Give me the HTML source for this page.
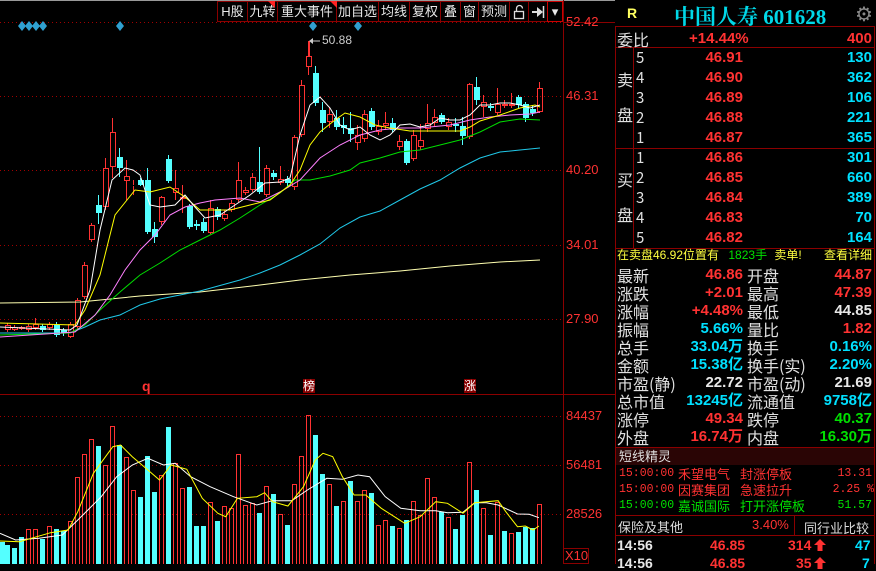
<!DOCTYPE html>
<html><head><meta charset="utf-8"><style>
*{margin:0;padding:0;box-sizing:border-box}
body{width:876px;height:564px;background:#000;overflow:hidden;position:relative;font-family:"Liberation Sans","Noto Sans CJK SC",sans-serif}
.a{position:absolute;white-space:nowrap}
.btn{position:absolute;top:1px;height:21px;border:1px solid #8b0000;color:#e8e8e8;font-size:13px;line-height:19px;text-align:center;font-family:"Liberation Sans","WenQuanYi Zen Hei",sans-serif}
.lbl{position:absolute;color:#e0e0e0;font-size:16px;font-family:"WenQuanYi Zen Hei","Noto Sans CJK SC",sans-serif;line-height:18px}
.num{position:absolute;font-weight:bold;font-size:15px;line-height:18px;text-align:right}
.r{color:#ff3232}.c{color:#00e0ff}.w{color:#e8e8e8}.g{color:#00e000}.y{color:#ffff40}
.ax{position:absolute;left:566px;color:#ff3232;font-size:13px}
.sm{position:absolute;font-size:13px;line-height:16px;font-family:"WenQuanYi Zen Hei","Noto Sans CJK SC",sans-serif}
.tm{position:absolute;font-size:11.5px;line-height:16px;font-family:"Liberation Mono",monospace}
</style></head><body>
<div class="a" style="left:0;top:0;width:615px;height:1px;background:#999"></div>
<svg id="ch" class="a" style="left:0;top:0" width="615" height="564"></svg>
<!-- toolbar -->
<div class="btn" style="left:217px;width:31px">H股</div>
<div class="btn" style="left:247px;width:31px">九转</div>
<div class="btn" style="left:277px;width:60px">重大事件</div>
<div class="btn" style="left:336px;width:43px">加自选</div>
<div class="btn" style="left:378px;width:32px">均线</div>
<div class="btn" style="left:409px;width:32px">复权</div>
<div class="btn" style="left:440px;width:21px">叠</div>
<div class="btn" style="left:460px;width:19px">窗</div>
<div class="btn" style="left:478px;width:32px">预测</div>
<div class="btn" style="left:509px;width:20px"><svg width="14" height="16" style="margin-top:2px"><path d="M4.5 7V4.5a3 3 0 0 1 6 0" fill="none" stroke="#ddd" stroke-width="1.3"/><rect x="2.5" y="7.5" width="9" height="7" fill="none" stroke="#ddd" stroke-width="1.3"/></svg></div>
<div class="btn" style="left:528px;width:20px"><svg width="14" height="14" style="margin-top:3px"><path d="M1 7h6" stroke="#ddd" stroke-width="2"/><path d="M6 2l6 5-6 5z" fill="#ddd"/><path d="M12.5 1v12" stroke="#ddd" stroke-width="1.5"/></svg></div>
<div class="btn" style="left:547px;width:16px;border-color:#c00">&#9662;</div>
<div class="a" style="left:268px;top:1px;width:0;height:0;border-left:7px solid transparent;border-top:7px solid #f22"></div>
<div class="a" style="left:330px;top:1px;width:0;height:0;border-left:7px solid transparent;border-top:7px solid #f22"></div>
<!-- axis labels -->
<div class="ax" style="top:14px">52.42</div>
<div class="ax" style="top:88px">46.31</div>
<div class="ax" style="top:162px">40.20</div>
<div class="ax" style="top:237px">34.01</div>
<div class="ax" style="top:311px">27.90</div>
<div class="ax" style="top:408px">84437</div>
<div class="ax" style="top:457px">56481</div>
<div class="ax" style="top:506px">28526</div>
<div class="a" style="left:563px;top:548px;width:26px;height:16px;border:1px solid #8b0000;color:#ff3232;font-size:13px;line-height:14px;padding-left:1px">X10</div>
<div class="a" style="left:322px;top:33px;color:#ccc;font-size:12px">50.88</div>
<div class="a" style="left:142px;top:378px;color:#ff3232;font-size:14px;font-weight:bold">q</div>
<div class="a" style="left:303px;top:379px;color:#fff;background:#800;font-size:12px;line-height:14px">榜</div>
<div class="a" style="left:464px;top:379px;color:#fff;background:#800;font-size:12px;line-height:14px">涨</div>
<!-- right panel -->
<div class="a" style="left:615px;top:26px;width:1px;height:538px;background:#8b0000"></div>
<div class="a" style="left:874px;top:26px;width:1px;height:538px;background:#8b0000"></div>
<div class="a" style="left:627px;top:5px;color:#ffff60;font-size:14px;font-weight:bold">R</div>
<div class="a" style="left:674px;top:1px;color:#00d8e8;font-size:21px;font-weight:bold;font-family:'Liberation Serif','Noto Serif CJK SC',serif">中国人寿 601628</div>
<div class="a" style="left:855px;top:2px;color:#888;font-size:20px">&#9881;</div>
<div class="a" style="left:615px;top:26px;width:260px;height:1px;background:#8b0000"></div>
<div class="a" style="left:615px;top:47px;width:260px;height:1px;background:#8b0000"></div>
<div class="a" style="left:615px;top:148px;width:260px;height:1px;background:#8b0000"></div>
<div class="a" style="left:615px;top:248px;width:260px;height:1px;background:#8b0000"></div>
<div class="a" style="left:633px;top:48px;width:1px;height:200px;background:#8b0000"></div>
<div class="lbl" style="left:617px;top:30px">委比</div>
<div class="num r" style="top:30px;width:90px;text-align:left;left:689px">+14.44%</div>
<div class="num r" style="left:800px;top:30px;width:72px">400</div>
<div class="lbl" style="left:617px;top:70px">卖</div><div class="lbl" style="left:617px;top:105px">盘</div>
<div class="lbl" style="left:617px;top:170px">买</div><div class="lbl" style="left:617px;top:205px">盘</div>
<div id="ob"></div>
<div class="a" style="left:617px;top:248px;font-size:12px;line-height:14px;font-family:'WenQuanYi Zen Hei',sans-serif"><span class="y">在卖盘46.92位置有</span> <span class="g" style="margin-left:6px">1823手</span> <span class="y" style="margin-left:4px">卖单!</span></div>
<div class="a y" style="left:824px;top:248px;font-size:12px;line-height:14px;font-family:'WenQuanYi Zen Hei',sans-serif">查看详细</div>
<div id="dt"></div>
<div class="a" style="left:615px;top:447px;width:260px;height:1px;background:#8b0000"></div>
<div class="a" style="left:616px;top:448px;width:258px;height:17px;background:#2a0505"></div>
<div class="a" style="left:619px;top:448px;color:#ddd;font-size:13px;line-height:17px;font-family:'WenQuanYi Zen Hei',sans-serif">短线精灵</div>
<div class="tm r" style="left:619px;top:466px">15:00:00</div><div class="sm r" style="left:678px;top:466px">禾望电气</div><div class="sm r" style="left:740px;top:466px">封涨停板</div><div class="tm r" style="left:820px;top:466px;width:52px;text-align:right">13.31</div>
<div class="tm r" style="left:619px;top:482px">15:00:00</div><div class="sm r" style="left:678px;top:482px">因赛集团</div><div class="sm r" style="left:740px;top:482px">急速拉升</div><div class="tm r" style="left:810px;top:482px;width:64px;text-align:right">2.25 %</div>
<div class="tm g" style="left:619px;top:498px">15:00:00</div><div class="sm g" style="left:678px;top:498px">嘉诚国际</div><div class="sm g" style="left:740px;top:498px">打开涨停板</div><div class="tm g" style="left:820px;top:498px;width:52px;text-align:right">51.57</div>
<div class="a" style="left:615px;top:515px;width:260px;height:1px;background:#8b0000"></div>
<div class="a" style="left:794px;top:515px;width:1px;height:20px;background:#8b0000"></div>
<div class="a" style="left:618px;top:517px;color:#ddd;font-size:13px;font-family:'WenQuanYi Zen Hei',sans-serif">保险及其他</div>
<div class="a r" style="left:752px;top:517px;font-size:13px">3.40%</div>
<div class="a" style="left:804px;top:518px;color:#ddd;font-size:13px;font-family:'WenQuanYi Zen Hei',sans-serif">同行业比较</div>
<div class="a" style="left:615px;top:535px;width:260px;height:1px;background:#8b0000"></div>
<div class="a w" style="left:617px;top:537px;font-size:14px;font-weight:bold">14:56</div>
<div class="a r" style="left:710px;top:537px;font-size:14px;font-weight:bold">46.85</div>
<div class="a r" style="left:788px;top:537px;font-size:14px;font-weight:bold">314</div>
<svg class="a" style="left:814px;top:539px" width="12" height="12"><path d="M6 0L12 6H8.5V12H3.5V6H0z" fill="#ff3232"/></svg>
<div class="a c" style="left:855px;top:537px;font-size:14px;font-weight:bold">47</div>
<div class="a w" style="left:617px;top:555px;font-size:14px;font-weight:bold">14:56</div>
<div class="a r" style="left:710px;top:555px;font-size:14px;font-weight:bold">46.85</div>
<div class="a r" style="left:796px;top:555px;font-size:14px;font-weight:bold">35</div>
<svg class="a" style="left:814px;top:557px" width="12" height="12"><path d="M6 0L12 6H8.5V12H3.5V6H0z" fill="#ff3232"/></svg>
<div class="a c" style="left:862px;top:555px;font-size:14px;font-weight:bold">7</div>
<script>
var ob=document.getElementById('ob'),h='';
var sp=['46.91','46.90','46.89','46.88','46.87'],sv=['130','362','106','221','365'];
var bp=['46.86','46.85','46.84','46.83','46.82'],bv=['301','660','389','70','164'];
for(var i=0;i<5;i++){var t=49+i*20;h+='<div class="lbl" style="left:636px;top:'+t+'px;font-size:15px">'+(5-i)+'</div><div class="num r" style="left:680px;top:'+t+'px;width:63px">'+sp[i]+'</div><div class="num c" style="left:800px;top:'+t+'px;width:72px">'+sv[i]+'</div>';
var t2=149+i*20;h+='<div class="lbl" style="left:636px;top:'+t2+'px;font-size:15px">'+(i+1)+'</div><div class="num r" style="left:680px;top:'+t2+'px;width:63px">'+bp[i]+'</div><div class="num c" style="left:800px;top:'+t2+'px;width:72px">'+bv[i]+'</div>';}
ob.innerHTML=h;
var rows=[['最新','46.86','r','开盘','44.87','r'],['涨跌','+2.01','r','最高','47.39','r'],['涨幅','+4.48%','r','最低','44.85','w'],['振幅','5.66%','c','量比','1.82','r'],['总手','33.04万','c','换手','0.16%','c'],['金额','15.38亿','c','换手(实)','2.20%','c'],['市盈(静)','22.72','w','市盈(动)','21.69','w'],['总市值','13245亿','c','流通值','9758亿','c'],['涨停','49.34','r','跌停','40.37','g'],['外盘','16.74万','r','内盘','16.30万','g']];
h='';rows.forEach(function(r,i){var t=266+i*18;h+='<div class="lbl" style="left:617px;top:'+t+'px">'+r[0]+'</div><div class="num '+r[2]+'" style="left:660px;top:'+t+'px;width:83px">'+r[1]+'</div><div class="lbl" style="left:747px;top:'+t+'px">'+r[3]+'</div><div class="num '+r[5]+'" style="left:790px;top:'+t+'px;width:82px">'+r[4]+'</div>';});
document.getElementById('dt').innerHTML=h;
var s='',R='#ff3232',C='#54ffff';
function ln(x1,y1,x2,y2,c,extra){s+='<line x1="'+x1+'" y1="'+y1+'" x2="'+x2+'" y2="'+y2+'" stroke="'+c+'" '+(extra||'')+'/>';}
[22,96,170,245,319,416,465,514].forEach(function(y){ln(0,y+.5,563,y+.5,'#a00000','stroke-dasharray="1,3"');});
ln(563.5,0,563.5,564,'#8b0000');ln(0,394.5,615,394.5,'#8b0000');ln(563,22.5,615,22.5,'#8b0000');
var K=[[330,325,323,332],[330,327,325,331],[329,327,326,330],[330,326,324,332],[328,324,318,330],[326,330,324,332],[328,324,322,330],[325,335,322,337],[330,333,328,336],[337,324,322,338],[327,300,298,330],[297,265,262,299],[240,225,223,242],[205,213,195,224],[207,168,158,210],[167,132,118,178],[157,168,148,177],[181,176,160,200],[186,185,180,195],[180,185,178,186],[180,232,168,234],[229,237,222,243],[222,197,196,225],[159,181,155,183],[193,188,170,200],[199,197,185,213],[206,227,204,229],[224,226,220,230],[222,231,218,233],[233,208,200,234],[209,217,207,220],[219,214,210,221],[210,203,200,212],[200,180,162,202],[193,190,187,195],[190,177,173,192],[182,192,147,194],[195,168,165,197],[173,177,170,180],[183,179,166,185],[179,183,176,186],[187,137,135,190],[135,85,80,137],[67,56,41,75],[73,103,66,106],[110,123,102,132],[122,114,107,128],[118,127,110,130],[125,128,117,134],[128,134,112,142],[143,135,125,150],[139,114,110,142],[111,127,108,130],[132,126,120,135],[126,123,112,130],[123,130,118,132],[147,141,135,150],[141,163,139,165],[159,135,130,161],[147,140,124,150],[129,123,104,132],[123,117,109,126],[115,122,113,124],[127,122,118,130],[124,126,118,132],[126,136,117,145],[137,84,83,139],[87,100,77,105],[107,102,95,117],[106,108,103,111],[113,104,88,115],[106,104,100,108],[106,104,93,108],[97,105,95,108],[104,118,102,122],[109,113,105,116],[112,88,82,113]];
K.forEach(function(k,i){var x=7+7*i,o=k[0],c=k[1],up=c<o;var t=Math.min(o,c),b=Math.max(o,c);if(b-t<1)b=t+1;
if(up){ln(x+.5,k[2],x+.5,t,R);ln(x+.5,b,x+.5,k[3],R);s+='<rect x="'+(x-2)+'.5" y="'+(t+.5)+'" width="5" height="'+(b-t-1)+'" fill="none" stroke="'+R+'"/>';}
else{ln(x+.5,k[2],x+.5,k[3],C);s+='<rect x="'+(x-2)+'" y="'+t+'" width="6" height="'+(b-t)+'" fill="'+C+'"/>';}});
function pl(pts,c,w){s+='<polyline fill="none" stroke="'+c+'" stroke-width="'+(w||1)+'" points="'+pts.map(function(p){return p.join(',')}).join(' ')+'"/>';}
pl([[0,303],[80,302],[140,296],[200,292],[260,285],[300,280],[350,275],[400,271],[450,266],[500,262],[540,260]],'#ffffb0');
pl([[0,333],[70,333],[85,327],[100,320],[120,315],[140,305],[160,299],[180,295],[200,291],[240,280],[260,273],[280,265],[300,255],[320,244],[340,228],[360,217],[380,211],[400,200],[420,189],[440,180],[460,168],[480,158],[500,152],[520,150],[540,148]],'#20c8e8');
pl([[0,335],[70,333],[85,325],[100,310],[120,292],[140,275],[160,263],[180,250],[200,240],[220,230],[240,218],[260,205],[280,193],[295,180],[310,180],[330,176],[350,170],[360,163],[380,158],[400,152],[420,150],[440,145],[460,140],[480,132],[500,122],[520,119],[540,120]],'#00dd00');
pl([[0,337],[75,332],[95,315],[110,295],[125,270],[140,250],[155,235],[170,215],[185,207],[200,203],[215,200],[240,198],[260,202],[280,192],[300,180],[320,158],[340,145],[360,135],[380,130],[400,128],[420,128],[450,125],[470,120],[490,117],[510,115],[530,114],[540,112]],'#ff80ff');
pl([[0,323],[75,325],[85,310],[100,275],[115,215],[135,190],[150,192],[170,187],[185,197],[200,210],[215,210],[230,210],[250,205],[270,200],[290,185],[300,170],[310,145],[320,132],[335,120],[345,113],[360,117],[375,125],[390,128],[410,131],[430,131],[460,131],[470,127],[480,121],[500,115],[520,108],[535,105],[540,107]],'#ffff00');
pl([[0,327],[70,330],[77,325],[90,290],[100,230],[112,180],[125,168],[133,170],[140,175],[150,205],[160,207],[175,205],[185,195],[195,207],[205,218],[220,215],[235,205],[250,195],[265,183],[280,182],[290,178],[300,135],[310,105],[320,97],[330,108],[340,125],[350,130],[360,127],[370,135],[380,140],[390,135],[400,125],[410,124],[420,127],[430,125],[440,118],[450,120],[460,120],[470,115],[480,105],[490,105],[500,103],[510,103],[520,105],[530,108],[540,105]],'#ffffff');
[22,29,36,43,120,313,358].forEach(function(x){s+='<polygon points="'+x+',21 '+(x+4)+',26 '+x+',31 '+(x-4)+',26" fill="#30a0d0"/>';});
ln(309.5,41,309.5,56,R);ln(310,41,320,41,'#ccc');s+='<polygon points="309,41 313,38 313,44" fill="#ccc"/>';
var V=[[0,485,0],[13,495,0],[31,503,0],[49,470,0],[67,448,1],[85,448,1],[103,478,0],[121,438,1],[139,447,0],[157,453,0],[175,423,1],[193,292,1],[211,223,1],[229,178,1],[247,198,0],[265,255,1],[283,138,1],[301,195,0],[319,232,1],[337,330,1],[355,351,0],[373,228,0],[391,336,0],[409,286,1],[427,141,0],[445,250,1],[463,324,1],[481,321,0],[499,438,0],[517,438,0],[535,367,1],[553,423,0],[571,378,1],[589,384,1],[607,222,1],[625,376,1],[643,370,1],[661,399,0],[679,318,1],[697,342,0],[715,402,1],[733,435,0],[751,312,1],[769,228,1],[787,105,1],[805,165,0],[823,282,0],[841,312,1],[859,378,0],[877,363,1],[895,302,0],[913,363,1],[931,330,1],[949,339,0],[967,435,1],[985,420,1],[1003,438,0],[1021,444,1],[1039,420,0],[1057,363,1],[1075,405,1],[1093,294,1],[1111,351,1],[1129,396,0],[1147,411,1],[1165,447,0],[1183,405,0],[1201,246,1],[1219,330,0],[1237,384,1],[1255,465,0],[1273,366,1],[1291,453,0],[1309,459,1],[1327,456,0],[1345,441,0],[1363,444,0],[1381,372,1]];
V.forEach(function(v){var x=Math.round(v[0]/2.57),y=Math.round(380+v[1]/3);if(v[2])s+='<rect x="'+(x+.5)+'" y="'+(y+.5)+'" width="4" height="'+(564-y)+'" fill="none" stroke="'+R+'"/>';else s+='<rect x="'+x+'" y="'+y+'" width="5" height="'+(564-y)+'" fill="'+C+'"/>';});
function vp(a,c){pl(a.map(function(p){return [(p[0]/2.57).toFixed(1),(380+p[1]/3).toFixed(1)]}),c);}
vp([[0,460],[40,480],[100,475],[160,465],[200,420],[260,350],[300,290],[340,255],[380,235],[420,255],[450,250],[490,290],[540,320],[600,350],[660,375],[700,362],[750,362],[790,330],[840,295],[880,298],[920,285],[950,290],[990,350],[1030,385],[1080,392],[1120,392],[1150,398],[1190,397],[1220,368],[1250,368],[1280,375],[1330,402],[1360,403],[1385,413]],'#fff');
vp([[0,483],[50,485],[130,458],[175,450],[200,395],[240,280],[290,200],[310,195],[340,230],[380,270],[410,300],[440,255],[480,268],[520,355],[560,400],[580,410],[610,355],[660,350],[680,338],[700,365],[740,378],[780,320],[810,240],[830,220],[855,230],[880,290],[910,345],[940,345],[980,385],[1040,430],[1080,410],[1120,365],[1150,370],[1190,400],[1220,368],[1280,362],[1300,395],[1330,440],[1350,438],[1370,450],[1385,438]],'#ff0');
document.getElementById('ch').innerHTML=s;
</script>
</body></html>
